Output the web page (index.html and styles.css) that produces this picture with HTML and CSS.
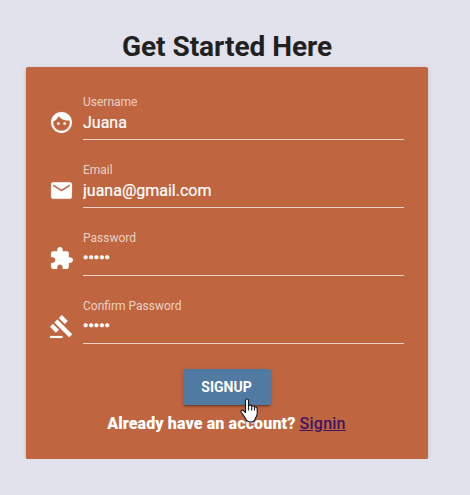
FILE: index.html
```
<!DOCTYPE html>
<html lang="en">
<head>
<meta charset="utf-8">
<title>Get Started Here</title>
<link rel="stylesheet" href="styles.css">
</head>
<body>
<main class="page">
  <h1 class="title">Get Started Here</h1>
  <form class="card">
    <div class="row">
      <svg class="icon" viewBox="0 0 24 24"><path d="M9 11.75c-.69 0-1.25.56-1.25 1.25s.56 1.25 1.25 1.25 1.25-.56 1.25-1.25-.56-1.25-1.25-1.25zm6 0c-.69 0-1.25.56-1.25 1.25s.56 1.25 1.25 1.25 1.25-.56 1.25-1.25-.56-1.25-1.25-1.25zM12 2C6.480 2 2 6.480 2 12s4.480 10 10 10 10-4.480 10-10S17.520 2 12 2zm0 18c-4.410 0-8-3.590-8-8 0-.29.020-.58.050-.86 2.360-1.050 4.230-2.980 5.210-5.370C11.070 8.330 14.050 10 17.420 10c.78 0 1.530-.09 2.250-.26.21.71.33 1.470.33 2.260 0 4.410-3.590 8-8 8z"/></svg>
      <div class="field"><label class="label" for="username">Username</label><input class="input" id="username" type="text" value="Juana"></div>
    </div>
    <div class="row">
      <svg class="icon" viewBox="0 0 24 24"><path d="M20 4H4c-1.100 0-1.990.9-1.990 2L2 18c0 1.100.9 2 2 2h16c1.100 0 2-.9 2-2V6c0-1.100-.9-2-2-2zm0 4l-8 5-8-5V6l8 5 8-5v2z"/></svg>
      <div class="field"><label class="label" for="email">Email</label><input class="input" id="email" type="text" value="juana@gmail.com"></div>
    </div>
    <div class="row">
      <svg class="icon" viewBox="0 0 24 24"><path d="M20.500 11H19V7c0-1.100-.9-2-2-2h-4V3.500C13 2.120 11.880 1 10.500 1S8 2.120 8 3.500V5H4c-1.100 0-1.990.9-1.990 2v3.800H3.500c1.490 0 2.700 1.210 2.700 2.700s-1.210 2.700-2.700 2.700H2V20c0 1.100.9 2 2 2h3.800v-1.500c0-1.490 1.210-2.700 2.700-2.700 1.490 0 2.700 1.210 2.700 2.700V22H17c1.100 0 2-.9 2-2v-4h1.500c1.380 0 2.500-1.120 2.500-2.500S21.880 11 20.500 11z"/></svg>
      <div class="field"><label class="label" for="password">Password</label><input class="input input-secret" id="password" type="password" value="12345"></div>
    </div>
    <div class="row">
      <svg class="icon" viewBox="0 0 24 24"><path d="M1 21h12v2H1zM5.245 8.070l2.830-2.827 14.140 14.142-2.828 2.828zM12.317 1l5.657 5.656-2.830 2.830-5.654-5.660zM3.825 9.485l5.657 5.657-2.828 2.828-5.657-5.657z"/></svg>
      <div class="field"><label class="label" for="confirm">Confirm Password</label><input class="input input-secret" id="confirm" type="password" value="12345"></div>
    </div>
    <div class="actions">
      <button class="button" type="button">SIGNUP</button>
      <svg class="cursor" viewBox="0 0 18 25"><path d="M5.500 2.500C5.500.5 8.500.5 8.500 2.500V8C9.500 6.500 11.500 7 11.700 8.400C12.700 7.500 14.300 8 14.500 9.300C15.700 8.600 17.200 9.300 17.200 11V15.500C17.200 18 15.500 19.500 15.200 21C14.500 23 12.500 24 10.500 24C7.500 24 6.200 22.500 5.200 20.300C4.200 18 2.600 16.300 1.200 14.200C.4 12.800 2 11.500 3.400 12.500L5.500 14.500Z"/><path d="M8.500 7.500V12.500M11.700 8.400V12.500M14.500 9.300V12.500"/></svg>
    </div>
    <p class="signin">Already have an account? <a class="link" href="#">Signin</a></p>
  </form>
</main>
</body>
</html>
```
FILE: styles.css
```
* { box-sizing: border-box; }
body {
  margin: 0;
  background: #e2e2ec;
  font-family: Roboto, sans-serif;
}
.page {
  width: 402px;
  margin-left: 26px;
  padding-top: 26px;
}
.title {
  margin: 0;
  height: 41px;
  line-height: 41px;
  font-size: 28px;
  font-weight: 700;
  letter-spacing: -.03px;
  text-align: center;
  color: #212121;
}
.card {
  height: 392px;
  padding: 25px 24px 0 23px;
  border-radius: 2px;
  background: #bf6640;
  box-shadow: 0 2px 1px -1px rgba(0,0,0,.4), 0 1px 1px rgba(0,0,0,.14), 0 1px 5px rgba(0,0,0,.14);
}
.row {
  display: flex;
  align-items: flex-end;
  gap: 9px;
  height: 48px;
  margin-bottom: 20px;
}
.icon {
  flex: none;
  width: 25px;
  height: 25px;
  margin-bottom: 5px;
  fill: #fff;
  stroke: #fff;
  stroke-width: .15;
}
.field {
  flex: 1;
  display: flex;
  flex-direction: column;
}
.label {
  height: 16px;
  line-height: 20px;
  font-size: 12px;
  color: rgba(255,255,255,.7);
}
.input {
  display: block;
  width: 100%;
  height: 32px;
  padding: 0 0 3px;
  border: 0;
  border-bottom: 1px solid rgba(255,255,255,.7);
  border-radius: 0;
  background: none;
  outline: none;
  font: 400 16px Roboto, sans-serif;
  color: #fff;
  -webkit-text-stroke: .2px #fff;
}
.input-secret {
  padding-bottom: 5px;
  -webkit-text-stroke: .6px #fff;
}
.actions {
  position: relative;
  display: flex;
  justify-content: center;
  padding-top: 5px;
}
.button {
  width: 88px;
  height: 36px;
  padding: 0;
  border: 0;
  border-radius: 2px;
  background: #507aa1;
  color: #fff;
  font: 700 14px Roboto, sans-serif;
  box-shadow: 0 3px 1px -2px rgba(0,0,0,.2), 0 2px 2px rgba(0,0,0,.14), 0 1px 5px rgba(0,0,0,.12);
}
.cursor {
  position: absolute;
  left: 191px;
  top: 34px;
  width: 18px;
  height: 25px;
  fill: #fff;
  stroke: #111827;
  stroke-width: 1.1;
  stroke-linejoin: round;
}
.signin {
  margin: 9px 0 0;
  line-height: 20px;
  font-size: 16px;
  font-weight: 900;
  letter-spacing: .12px;
  text-align: center;
  color: #fff;
}
.link {
  font-weight: 500;
  letter-spacing: .25px;
  color: #3f1463;
}
```
